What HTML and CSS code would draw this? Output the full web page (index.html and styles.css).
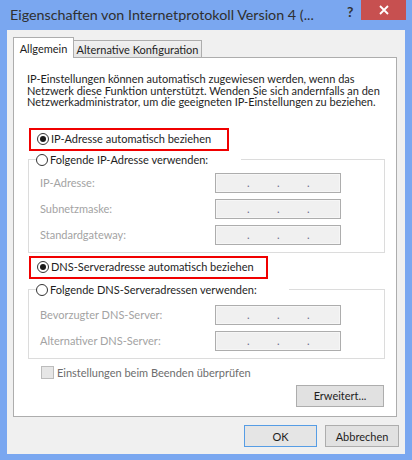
FILE: index.html
```html
<!DOCTYPE html>
<html lang="de">
<head>
<meta charset="utf-8">
<title>Eigenschaften von Internetprotokoll Version 4</title>
<link rel="stylesheet" href="styles.css">
</head>
<body>
<div class="window">
  <div class="titlebar">
    <span class="title">Eigenschaften von Internetprotokoll Version 4 (...</span>
    <span class="help">?</span>
    <span class="close"><svg width="10" height="10" viewBox="0 0 10 10"><path d="M1 1L9 9M9 1L1 9" stroke="#fff" stroke-width="1.8"/></svg></span>
  </div>
  <div class="client">
    <div class="tabs">
      <div class="tab active">Allgemein</div>
      <div class="tab inactive">Alternative Konfiguration</div>
    </div>
    <div class="panel">
      <p class="intro">IP-Einstellungen können automatisch zugewiesen werden, wenn das<br>Netzwerk diese Funktion unterstützt. Wenden Sie sich andernfalls an den<br>Netzwerkadministrator, um die geeigneten IP-Einstellungen zu beziehen.</p>

      <div class="highlight hl-ip"><span class="radio checked"></span><span class="opt">IP-Adresse automatisch beziehen</span></div>
      <fieldset class="group g-ip">
        <legend class="legend-ip"><span class="radio"></span><span class="opt">Folgende IP-Adresse verwenden:</span></legend>
        <div class="row first"><span class="lbl">IP-Adresse:</span><span class="ipfield"><i>.</i><i>.</i><i>.</i></span></div>
        <div class="row"><span class="lbl">Subnetzmaske:</span><span class="ipfield"><i>.</i><i>.</i><i>.</i></span></div>
        <div class="row"><span class="lbl">Standardgateway:</span><span class="ipfield"><i>.</i><i>.</i><i>.</i></span></div>
      </fieldset>

      <div class="highlight hl-dns"><span class="radio checked"></span><span class="opt">DNS-Serveradresse automatisch beziehen</span></div>
      <fieldset class="group g-dns">
        <legend class="legend-dns"><span class="radio"></span><span class="opt">Folgende DNS-Serveradressen verwenden:</span></legend>
        <div class="row first"><span class="lbl">Bevorzugter DNS-Server:</span><span class="ipfield"><i>.</i><i>.</i><i>.</i></span></div>
        <div class="row"><span class="lbl">Alternativer DNS-Server:</span><span class="ipfield"><i>.</i><i>.</i><i>.</i></span></div>
      </fieldset>

      <div class="check"><span class="box"></span><span class="check-text">Einstellungen beim Beenden überprüfen</span></div>
      <div class="adv"><button class="btn btn-adv">Erweitert...</button></div>
    </div>
    <div class="footer">
      <button class="btn btn-ok">OK</button>
      <button class="btn btn-cancel">Abbrechen</button>
    </div>
  </div>
</div>
</body>
</html>
```

FILE: styles.css
```css
* { box-sizing: border-box; }
html, body { margin: 0; padding: 0; }
body {
  width: 412px;
  height: 460px;
  overflow: hidden;
  background: #7aa7f0;
  font-family: Lato, "Noto Sans", sans-serif;
  font-size: 11px;
  color: #1e1e1e;
}
.window { width: 412px; height: 460px; }

.titlebar {
  height: 30px;
  display: flex;
  align-items: flex-start;
}
.title {
  flex: 1;
  padding-left: 10px;
  font-size: 14.3px;
  line-height: 30px;
  color: #2f2f2f;
  white-space: nowrap;
}
.help {
  width: 14px;
  margin-top: 3px;
  font-weight: bold;
  font-size: 14px;
  line-height: 18px;
  color: #333;
}
.close {
  width: 45px;
  height: 20px;
  margin-left: 0px;
  margin-right: 6px;
  background: #c75050;
  display: flex;
  align-items: center;
  justify-content: center;
}

.client {
  margin: 0 7px;
  height: 424px;
  background: #f0f0f0;
  padding: 7px 7px 0 6px;
}

.tabs {
  display: flex;
  align-items: flex-end;
  height: 20px;
}
.tab {
  border: 1px solid #adadad;
  border-bottom: none;
  display: flex;
  align-items: center;
  justify-content: center;
  white-space: nowrap;
}
.tab.active {
  position: relative;
  z-index: 1;
  width: 61px;
  height: 21px;
  margin-bottom: -1px;
  background: #fff;
}
.tab.inactive {
  width: 129px;
  height: 17px;
  margin-left: -1px;
  background: linear-gradient(#f0f0f0, #e5e5e5);
}

.panel {
  width: 384px;
  height: 360px;
  background: #fff;
  border: 1px solid #adadad;
  padding: 0 12px 0 13px;
}
.intro {
  margin: 15px 0 0 0;
  line-height: 11.5px;
  white-space: nowrap;
}

.highlight {
  height: 23px;
  border: 2px solid #f00000;
  display: flex;
  align-items: center;
  padding-left: 6px;
  margin-left: 2px;
}
.hl-ip { width: 200px; margin-top: 20px; }
.hl-dns { width: 239px; margin-top: 3px; }

.radio {
  width: 12px;
  height: 12px;
  border: 1px solid #333;
  border-radius: 50%;
  background: #fff;
  display: inline-flex;
  align-items: center;
  justify-content: center;
  flex: none;
  margin-right: 2px;
}
.radio.checked::after {
  content: "";
  width: 6px;
  height: 6px;
  border-radius: 50%;
  background: #1a1a1a;
}
.opt { line-height: 14px; white-space: nowrap; }

.group {
  margin: 2px 0 0 1px;
  width: 357px;
  border: 1px solid #dcdcdc;
  padding: 0 0 7px 11px;
}
.g-dns { margin-top: 4px; }
.group legend {
  display: flex;
  align-items: center;
  height: 14px;
  padding: 0 0 0 0;
  margin-left: -4px;
  background: #fff;
}
.legend-ip { width: 205px; }
.legend-dns { width: 253px; }

.row {
  display: flex;
  align-items: center;
  height: 20px;
  margin-top: 6px;
}
.g-ip .row.first { margin-top: 6px; }
.g-dns .row.first { margin-top: 8px; }
.lbl {
  width: 175px;
  color: #a3a3a3;
  white-space: nowrap;
}
.ipfield {
  width: 126px;
  height: 20px;
  border: 1px solid #adadad;
  background: #f0f0f0;
  box-shadow: inset 0 0 0 1px #f6f6f6;
  display: flex;
  padding-left: 31px;
  font-style: normal;
}
.ipfield i {
  width: 30px;
  font-style: normal;
  font-size: 11px;
  line-height: 18px;
  color: #6b6b8e;
}

.check {
  display: flex;
  align-items: center;
  height: 13px;
  margin: 7px 0 0 14px;
}
.box {
  width: 13px;
  height: 13px;
  border: 1px solid #bcbcbc;
  background: #e6e6e6;
  margin-right: 3px;
}
.check-text { color: #6d6d6d; white-space: nowrap; }

.adv {
  display: flex;
  justify-content: flex-end;
  margin-top: 6px;
}
.btn {
  font-family: inherit;
  font-size: 11px;
  color: #1e1e1e;
  background: #e1e1e1;
  border: 1px solid #adadad;
  height: 22px;
  padding: 0;
  margin: 0;
}
.btn-adv { width: 88px; }

.footer {
  display: flex;
  justify-content: flex-end;
  gap: 8px;
  margin-top: 8px;
  margin-right: -1px;
}
.btn-ok {
  width: 73px;
  border-color: #569de5;
  background: #e5e5e5;
}
.btn-cancel { width: 74px; }
```
